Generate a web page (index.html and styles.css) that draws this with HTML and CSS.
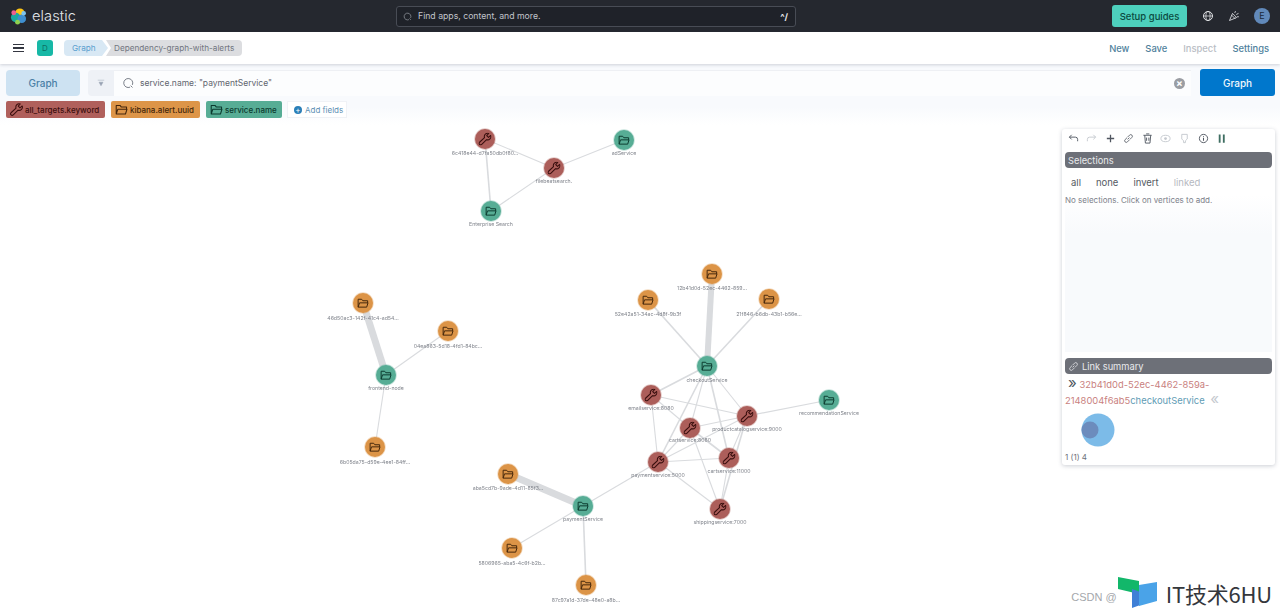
FILE: index.html
```html
<!DOCTYPE html>
<html lang="en">
<head>
<meta charset="utf-8">
<title>Dependency-graph-with-alerts - Graph - Elastic</title>
<link rel="stylesheet" href="styles.css">
</head>
<body>
<svg class="defs" aria-hidden="true">
  <defs>
    <symbol id="i-folder" viewBox="0 0 16 16">
      <path d="M1.5 13.5V3h4.7l1.6 2h6.4v2.8M1.5 13.5h11.4l1.8-5.7H3.4z" fill="none" stroke="currentColor" stroke-width="1.3" stroke-linejoin="round"/>
    </symbol>
    <symbol id="i-key" viewBox="0 0 16 16">
      <path d="M15 3.6l-2.7 2.5-2.2-2.3L12.6 1.2a4 4 0 0 0-5.2 5L1.3 12a1.9 1.9 0 0 0 2.7 2.7l5.9-5.9A4 4 0 0 0 15 3.6z" fill="none" stroke="currentColor" stroke-width="1.3" stroke-linejoin="round"/>
    </symbol>
  </defs>
</svg>

<header class="topbar">
  <div class="brand">
    <svg class="logo" viewBox="0 0 18 18" aria-hidden="true">
      <circle cx="10.5" cy="5.5" r="5" fill="#fec514"/>
      <circle cx="6" cy="10" r="5" fill="#1ba9a0"/>
      <circle cx="12.5" cy="11.5" r="4.5" fill="#3f8fd0"/>
      <circle cx="4" cy="5" r="2.6" fill="#ef5f92"/>
      <circle cx="14.5" cy="5.5" r="2.4" fill="#7dc5f0"/>
      <circle cx="8" cy="15" r="2.6" fill="#8fd14f"/>
    </svg>
    <span class="brand-name">elastic</span>
  </div>
  <div class="global-search">
    <svg class="search-icon" viewBox="0 0 16 16" aria-hidden="true"><path d="M13.5 10.5a6 6 0 1 0-3 3M11.5 11.5l2.5 2.5" fill="none" stroke="currentColor" stroke-width="1.2"/></svg>
    <span class="global-placeholder">Find apps, content, and more.</span>
    <span class="shortcut">^/</span>
  </div>
  <div class="top-actions">
    <button class="setup">Setup guides</button>
    <svg class="top-icon" viewBox="0 0 16 16" aria-hidden="true"><circle cx="8" cy="8" r="6" fill="none" stroke="currentColor" stroke-width="1.3"/><ellipse cx="8" cy="8" rx="2.8" ry="6" fill="none" stroke="currentColor" stroke-width="1"/><path d="M2 8h12" stroke="currentColor"/></svg>
    <svg class="top-icon" viewBox="0 0 16 16" aria-hidden="true"><path d="M2 14L6 4.5 11.5 10zM5 7l4.5 4.5M9 4l1-2.500M11 6l3-1.500M12 9l2.500 0" fill="none" stroke="currentColor" stroke-width="1.100"/></svg>
    <span class="avatar">E</span>
  </div>
</header>

<nav class="subbar">
  <span class="menu"><i></i><i></i><i></i></span>
  <span class="space">D</span>
  <div class="crumbs">
    <span class="crumb-link">Graph</span>
    <span class="crumb-current">Dependency-graph-with-alerts</span>
  </div>
  <div class="sub-links">
    <a class="sub-link">New</a>
    <a class="sub-link">Save</a>
    <a class="sub-link off">Inspect</a>
    <a class="sub-link">Settings</a>
  </div>
</nav>

<section class="controls">
  <div class="query-row">
    <button class="mode">Graph</button>
    <div class="query">
      <span class="filter">
        <svg viewBox="0 0 10 10" aria-hidden="true"><path d="M1 1.500h8M2.500 4h5L5 8.500z" fill="#98a2b3" stroke="#98a2b3" stroke-width=".6"/></svg>
      </span>
      <div class="query-input">
        <svg class="query-icon" viewBox="0 0 16 16" aria-hidden="true"><path d="M13.800 10.500a6 6 0 1 0-3 3M11.500 11.500l2.500 2.500" fill="none" stroke="currentColor" stroke-width="1.100"/></svg>
        <span class="query-text">service.name: "paymentService"</span>
        <span class="clear">×</span>
      </div>
    </div>
    <button class="go">Graph</button>
  </div>
  <div class="field-row">
    <span class="field f-key"><svg class="ficon"><use href="#i-key"/></svg>all_targets.keyword</span>
    <span class="field f-orange"><svg class="ficon"><use href="#i-folder"/></svg>kibana.alert.uuid</span>
    <span class="field f-green"><svg class="ficon"><use href="#i-folder"/></svg>service.name</span>
    <span class="add-field"><i class="plus">+</i>Add fields</span>
  </div>
</section>

<main class="canvas">
  <svg class="graph" viewBox="0 125 1280 487" width="1280" height="487" role="img" aria-label="Dependency graph">
    <g class="edges">
      <line x1="485" y1="139" x2="554" y2="168"/>
      <line class="w2" x1="485" y1="139" x2="491" y2="211"/>
      <line x1="554" y1="168" x2="491" y2="211"/>
      <line x1="554" y1="168" x2="624" y2="140"/>
      <line class="w7" x1="363" y1="303" x2="386" y2="375"/>
      <line x1="448" y1="331" x2="386" y2="375"/>
      <line x1="386" y1="375" x2="375" y2="447"/>
      <line class="w6" x1="712" y1="274" x2="707" y2="366"/>
      <line class="w2" x1="648" y1="300" x2="707" y2="366"/>
      <line class="w2" x1="769" y1="299" x2="707" y2="366"/>
      <line class="w2" x1="707" y1="366" x2="651" y2="395"/>
      <line x1="707" y1="366" x2="747" y2="416"/>
      <line x1="707" y1="366" x2="690" y2="428"/>
      <line class="w2" x1="707" y1="366" x2="729" y2="458"/>
      <line class="w2" x1="707" y1="366" x2="658" y2="462"/>
      <line x1="829" y1="400" x2="747" y2="416"/>
      <line x1="651" y1="395" x2="747" y2="416"/>
      <line x1="651" y1="395" x2="658" y2="462"/>
      <line x1="651" y1="395" x2="690" y2="428"/>
      <line x1="690" y1="428" x2="747" y2="416"/>
      <line class="w2" x1="690" y1="428" x2="729" y2="458"/>
      <line x1="690" y1="428" x2="720" y2="509"/>
      <line x1="690" y1="428" x2="658" y2="462"/>
      <line x1="747" y1="416" x2="658" y2="462"/>
      <line x1="747" y1="416" x2="729" y2="458"/>
      <line class="w2" x1="747" y1="416" x2="720" y2="509"/>
      <line x1="729" y1="458" x2="658" y2="462"/>
      <line x1="729" y1="458" x2="720" y2="509"/>
      <line x1="658" y1="462" x2="720" y2="509"/>
      <line x1="658" y1="462" x2="583" y2="506"/>
      <line class="w7" x1="508" y1="474" x2="583" y2="506"/>
      <line x1="583" y1="506" x2="512" y2="548"/>
      <line class="w2" x1="583" y1="506" x2="586" y2="585"/>
    </g>

    <g class="node key" transform="translate(485 139)"><circle r="10"/><use href="#i-key" x="-6.500" y="-6.500" width="13" height="13"/></g>
    <g class="node key" transform="translate(554 168)"><circle r="10"/><use href="#i-key" x="-6.500" y="-6.500" width="13" height="13"/></g>
    <g class="node green" transform="translate(624 140)"><circle r="10"/><use href="#i-folder" x="-6" y="-6" width="12" height="12"/></g>
    <g class="node green" transform="translate(491 211)"><circle r="10"/><use href="#i-folder" x="-6" y="-6" width="12" height="12"/></g>

    <g class="node orange" transform="translate(363 303)"><circle r="10"/><use href="#i-folder" x="-6" y="-6" width="12" height="12"/></g>
    <g class="node orange" transform="translate(448 331)"><circle r="10"/><use href="#i-folder" x="-6" y="-6" width="12" height="12"/></g>
    <g class="node green" transform="translate(386 375)"><circle r="10"/><use href="#i-folder" x="-6" y="-6" width="12" height="12"/></g>
    <g class="node orange" transform="translate(375 447)"><circle r="10"/><use href="#i-folder" x="-6" y="-6" width="12" height="12"/></g>

    <g class="node orange" transform="translate(712 274)"><circle r="10"/><use href="#i-folder" x="-6" y="-6" width="12" height="12"/></g>
    <g class="node orange" transform="translate(648 300)"><circle r="10"/><use href="#i-folder" x="-6" y="-6" width="12" height="12"/></g>
    <g class="node orange" transform="translate(769 299)"><circle r="10"/><use href="#i-folder" x="-6" y="-6" width="12" height="12"/></g>
    <g class="node green" transform="translate(707 366)"><circle r="10"/><use href="#i-folder" x="-6" y="-6" width="12" height="12"/></g>
    <g class="node green" transform="translate(829 400)"><circle r="10"/><use href="#i-folder" x="-6" y="-6" width="12" height="12"/></g>

    <g class="node key" transform="translate(651 395)"><circle r="10"/><use href="#i-key" x="-6.500" y="-6.500" width="13" height="13"/></g>
    <g class="node key" transform="translate(747 416)"><circle r="10"/><use href="#i-key" x="-6.500" y="-6.500" width="13" height="13"/></g>
    <g class="node key" transform="translate(690 428)"><circle r="10"/><use href="#i-key" x="-6.500" y="-6.500" width="13" height="13"/></g>
    <g class="node key" transform="translate(729 458)"><circle r="10"/><use href="#i-key" x="-6.500" y="-6.500" width="13" height="13"/></g>
    <g class="node key" transform="translate(658 462)"><circle r="10"/><use href="#i-key" x="-6.500" y="-6.500" width="13" height="13"/></g>
    <g class="node key" transform="translate(720 509)"><circle r="10"/><use href="#i-key" x="-6.500" y="-6.500" width="13" height="13"/></g>

    <g class="node orange" transform="translate(508 474)"><circle r="10"/><use href="#i-folder" x="-6" y="-6" width="12" height="12"/></g>
    <g class="node green" transform="translate(583 506)"><circle r="10"/><use href="#i-folder" x="-6" y="-6" width="12" height="12"/></g>
    <g class="node orange" transform="translate(512 548)"><circle r="10"/><use href="#i-folder" x="-6" y="-6" width="12" height="12"/></g>
    <g class="node orange" transform="translate(586 585)"><circle r="10"/><use href="#i-folder" x="-6" y="-6" width="12" height="12"/></g>

    <g class="labels">
      <text x="485" y="155">6c418e44-d7fa50db0f80...</text>
      <text x="554" y="183">filebeatsearch.</text>
      <text x="624" y="155">adService</text>
      <text x="491" y="226">Enterprise Search</text>
      <text x="363" y="320">46d50ac3-142f-41c4-ad54...</text>
      <text x="448" y="348">04ea863-5d18-4fd1-84bc...</text>
      <text x="386" y="390">frontend-node</text>
      <text x="375" y="464">6b05da75-d59e-4ee1-84ff...</text>
      <text x="712" y="290">12b41d0d-52ec-4462-859...</text>
      <text x="648" y="316">52e42a51-34ac-4d8f-9b3f</text>
      <text x="769" y="316">21f846-b6db-43b1-b56e...</text>
      <text x="707" y="382">checkoutService</text>
      <text x="651" y="410">emailservice:8080</text>
      <text x="747" y="431">productcatalogservice:9000</text>
      <text x="690" y="442">cartservice:8080</text>
      <text x="729" y="473">cartservice:11000</text>
      <text x="658" y="477">paymentservice:5000</text>
      <text x="720" y="524">shippingservice:7000</text>
      <text x="829" y="415">recommendationService</text>
      <text x="508" y="490">aba5cd7b-9ade-4d11-85f3...</text>
      <text x="583" y="521">paymentService</text>
      <text x="512" y="565">5806965-aba5-4c6f-b2b...</text>
      <text x="586" y="602">87c97a1d-37de-48e0-a8b...</text>
    </g>
  </svg>

  <aside class="panel">
    <div class="tools">
      <svg class="tool" viewBox="0 0 12 12" aria-hidden="true"><path d="M4 2L1.500 4.500 4 7M1.500 4.500H8a2.500 2.500 0 0 1 2.500 2.500v2" fill="none" stroke="currentColor"/></svg>
      <svg class="tool off" viewBox="0 0 12 12" aria-hidden="true"><path d="M8 2l2.500 2.500L8 7M10.500 4.500H4A2.500 2.500 0 0 0 1.500 7v2" fill="none" stroke="currentColor"/></svg>
      <svg class="tool" viewBox="0 0 12 12" aria-hidden="true"><path d="M6 2v8M2 6h8" fill="none" stroke="currentColor" stroke-width="1.400"/></svg>
      <svg class="tool" viewBox="0 0 12 12" aria-hidden="true"><path d="M5 7l2-2M4.500 5L2.300 7.200a1.700 1.700 0 0 0 2.500 2.500L7 7.500M7.500 7l2.200-2.200a1.700 1.700 0 0 0-2.500-2.500L5 4.500" fill="none" stroke="currentColor" stroke-width=".9"/></svg>
      <svg class="tool" viewBox="0 0 12 12" aria-hidden="true"><path d="M1.500 2.500h9M4.500 1h3.500M3 2.500l.7 8.500h5L9.500 2.500M5 5v3.500M7.500 5v3.500" fill="none" stroke="currentColor" stroke-width="1"/></svg>
      <svg class="tool off" viewBox="0 0 12 12" aria-hidden="true"><ellipse cx="6" cy="6" rx="5" ry="3.500" fill="none" stroke="currentColor"/><circle cx="6" cy="6" r="1.500" fill="currentColor"/></svg>
      <svg class="tool off" viewBox="0 0 12 12" aria-hidden="true"><path d="M3 1.500h6v5L7 8.500v2H5v-2L3 6.500z" fill="none" stroke="currentColor"/></svg>
      <svg class="tool" viewBox="0 0 12 12" aria-hidden="true"><circle cx="6" cy="6" r="4.500" fill="none" stroke="currentColor"/><path d="M6 5.500v3M6 3.500v1" stroke="currentColor" stroke-width="1.100"/></svg>
      <svg class="tool pause" viewBox="0 0 12 12" aria-hidden="true"><path d="M3 1.500h2v9H3zM7.500 1.500h2v9h-2z" fill="currentColor"/></svg>
    </div>
    <h2 class="bar">Selections</h2>
    <div class="sel-links">
      <span>all</span><span>none</span><span>invert</span><span class="off">linked</span>
    </div>
    <div class="sel-body">No selections. Click on vertices to add.</div>
    <h2 class="bar">
      <svg class="bar-icon" viewBox="0 0 12 12" aria-hidden="true"><path d="M5 7l2-2M4.500 5L2.300 7.200a1.700 1.700 0 0 0 2.500 2.500L7 7.500M7.500 7l2.200-2.200a1.700 1.700 0 0 0-2.500-2.500L5 4.500" fill="none" stroke="currentColor"/></svg>
      Link summary
    </h2>
    <p class="link-text"><span class="chev">»</span> <span class="red">32b41d0d-52ec-4462-859a-2148004f6ab5</span><span class="teal">checkoutService</span> <span class="chev pale">«</span></p>
    <svg class="venn" viewBox="0 0 34 34" aria-hidden="true"><circle cx="17" cy="17" r="16.500" fill="#7cbbe8"/><circle cx="9" cy="17" r="8.500" fill="#6c8cbd"/></svg>
    <p class="counts">1 (1) 4</p>
  </aside>

  <div class="watermark">
    <span class="wm-csdn">CSDN @</span>
    <svg class="wm-logo" viewBox="0 0 40 31" aria-hidden="true"><path d="M0 0l21 4v13L0 12z" fill="#12b76a"/><path d="M14 12l11 4v11l-11 4z" fill="#3f7fd6"/><path d="M21 8l18-3v19l-18 5z" fill="#4aa3e8"/></svg>
    <span class="wm-text">IT技术6HU</span>
  </div>
</main>
</body>
</html>
```
FILE: styles.css
```css
* { box-sizing: border-box; }
html, body { height: 100%; }
body {
  margin: 0;
  display: flex;
  flex-direction: column;
  height: 612px;
  overflow: hidden;
  background: #fff;
  font-family: Inter, "Noto Sans", "Liberation Sans", sans-serif;
  color: #343741;
}
button { font: inherit; border: 0; }
.defs { position: absolute; width: 0; height: 0; }

/* top bar */
.topbar {
  flex: 0 0 32px;
  display: flex;
  align-items: center;
  position: relative;
  background: #25282f;
  padding: 0 10px 0 10px;
}
.brand { display: flex; align-items: center; gap: 5px; width: 386px; }
.logo { width: 17px; height: 17px; }
.brand-name { color: #e4e6ea; font-size: 14.6px; font-weight: 300; letter-spacing: .1px; }
.global-search {
  width: 400px;
  height: 21px;
  display: flex;
  align-items: center;
  padding: 0 7px 0 6px;
  border: 1px solid #484c55;
  border-radius: 3px;
  background: #1f2229;
  color: #c2c5cb;
}
.search-icon { width: 9px; height: 9px; margin-right: 6px; flex: none; color: #9da1a9; }
.global-placeholder { flex: 1; font-size: 8.7px; }
.shortcut { font-size: 9px; font-weight: 700; color: #e8e9eb; }
.top-actions { flex: 1; display: flex; align-items: center; justify-content: flex-end; }
.setup {
  width: 75px;
  height: 22px;
  margin-right: 15px;
  border-radius: 3px;
  background: #4dd0bd;
  color: #0b4a40;
  font-size: 9.5px;
  font-weight: 500;
}
.top-icon { width: 12px; height: 12px; margin-right: 14px; color: #e6e7ea; }
.avatar {
  width: 16px;
  height: 16px;
  border-radius: 50%;
  background: #6189ba;
  color: #1c2a3c;
  font-size: 9px;
  line-height: 16px;
  text-align: center;
}

/* sub navigation */
.subbar {
  flex: 0 0 32px;
  display: flex;
  align-items: center;
  position: relative;
  z-index: 1;
  background: #fff;
  box-shadow: 0 1px 3px rgba(60, 70, 90, .22);
  padding: 0 11px 0 13px;
}
.menu { width: 11px; display: flex; flex-direction: column; gap: 2px; margin-right: 13px; }
.menu i { height: 1.5px; background: #343741; }
.space {
  width: 16px;
  height: 16px;
  margin-right: 11px;
  border-radius: 3px;
  background: #17b8a6;
  color: #0d6f64;
  font-size: 8px;
  line-height: 16px;
  text-align: center;
}
.crumbs { display: flex; font-size: 8.2px; height: 16px; line-height: 16px; white-space: nowrap; }
.crumb-link {
  width: 44px;
  padding-left: 8px;
  border-radius: 4px 0 0 4px;
  background: #d8e8f4;
  color: #5b9fcf;
  clip-path: polygon(0 0, 38px 0, 44px 50%, 38px 100%, 0 100%);
}
.crumb-current {
  width: 136px;
  margin-left: -2px;
  padding-left: 8px;
  border-radius: 0 4px 4px 0;
  background: #dcdde0;
  color: #71757f;
  clip-path: polygon(0 0, 100% 0, 100% 100%, 0 100%, 5px 50%);
}
.sub-links { margin-left: auto; display: flex; gap: 16px; font-size: 9.4px; font-weight: 500; }
.sub-link { color: #4f7f9c; }
.sub-link.off { color: #b9bdc4; }

/* query controls */
.controls {
  flex: 0 0 61px;
  padding: 5px 5px 0 6px;
  background: linear-gradient(#f8fafd 0, #f8fafd 70%, #fff 100%);
}
.query-row { display: flex; align-items: center; height: 27px; }
.mode {
  width: 74px;
  height: 26px;
  margin-right: 8px;
  border-radius: 4px;
  background: #cde2f2;
  color: #4a7fa6;
  font-size: 10px;
  font-weight: 500;
}
.query { flex: 1; display: flex; height: 26px; margin-right: 9px; }
.filter {
  width: 26px;
  display: flex;
  align-items: center;
  justify-content: center;
  border-radius: 4px 0 0 4px;
  background: #eef1f6;
}
.filter svg { width: 8px; height: 8px; }
.query-input {
  flex: 1;
  display: flex;
  align-items: center;
  padding: 1px 6px 0 8px;
  background: #fcfdfe;
  box-shadow: inset 0 1px 0 #eef0f4;
}
.query-icon { width: 12px; height: 12px; margin-right: 6px; color: #5f6570; flex: none; }
.query-text { flex: 1; font-size: 8.5px; color: #61656e; }
.clear {
  width: 11px;
  height: 11px;
  border-radius: 50%;
  background: #9a9da3;
  color: #fff;
  font-size: 10px;
  font-weight: 700;
  line-height: 11px;
  text-align: center;
}
.go {
  width: 75px;
  height: 27px;
  border-radius: 3px;
  background: #0077cc;
  color: #f2f8fc;
  font-size: 10px;
  font-weight: 500;
}
.field-row { display: flex; align-items: center; gap: 6px; height: 17px; margin-top: 5px; }
.field {
  height: 17px;
  display: flex;
  align-items: center;
  gap: 2px;
  padding: 0 4px;
  border-radius: 2px;
  font-size: 8px;
  font-weight: 500;
  white-space: nowrap;
}
.ficon { width: 13px; height: 13px; flex: none; }
.f-key { width: 99px; background: #b0605c; color: #3c0f0e; }
.f-orange { width: 89px; background: #dd9548; color: #43250a; }
.f-green { width: 76px; background: #57ad95; color: #0b3a2e; }
.add-field {
  width: 60px;
  height: 17px;
  margin-left: -1px;
  display: flex;
  align-items: center;
  gap: 3px;
  padding-left: 6px;
  border: 1px solid #f0f2f6;
  background: #fff;
  color: #5d90b4;
  font-size: 8px;
  white-space: nowrap;
}
.plus {
  flex: none;
  width: 8px;
  height: 8px;
  border-radius: 50%;
  background: #2a7fb8;
  color: #fff;
  font-size: 8px;
  font-style: normal;
  line-height: 8px;
  text-align: center;
}

/* graph canvas */
.canvas { flex: 1; position: relative; overflow: hidden; background: #fff; }
.graph { display: block; }
.edges line { stroke: #d9dbde; stroke-width: 1.1; }
.edges .w2 { stroke-width: 1.6; }
.edges .w6 { stroke-width: 6; }
.edges .w7 { stroke-width: 7; }
.node circle { stroke-width: 1.5; }
.node.key { color: #3a0f0e; }
.node.key circle { fill: #ac5e5a; stroke: rgba(172, 94, 90, .35); }
.node.orange { color: #43250a; }
.node.orange circle { fill: #dc9447; stroke: rgba(220, 148, 71, .35); }
.node.green { color: #0b3a2e; }
.node.green circle { fill: #57ad95; stroke: rgba(87, 173, 149, .35); }
.labels { filter: blur(.3px); }
.labels text {
  fill: #80848c;
  font-size: 5.2px;
  text-anchor: middle;
}

/* side panel */
.panel {
  position: absolute;
  top: 4px;
  left: 1062px;
  width: 213px;
  height: 336px;
  display: flex;
  flex-direction: column;
  padding: 0 3px 3px;
  background: #fff;
  border-radius: 3px;
  box-shadow: 0 1px 4px rgba(70, 80, 100, .28);
  color: #5f636c;
}
.tools { display: flex; align-items: center; height: 23px; padding: 0 0 4px 2.5px; gap: 7.6px; flex: none; }
.tool { width: 11px; height: 11px; color: #505660; flex: none; }
.tool.off { color: #c4c8ce; }
.tool.pause { color: #3f6e62; }
.bar {
  flex: none;
  display: flex;
  align-items: center;
  gap: 3px;
  height: 16px;
  margin: 0;
  padding-left: 3px;
  border-radius: 4px;
  background: #6d7078;
  color: #e9eaec;
  font-size: 9.300px;
  font-weight: 400;
}
.bar-icon { width: 11px; height: 11px; color: #d9dadd; }
.sel-links {
  flex: none;
  display: flex;
  gap: 15px;
  height: 27px;
  align-items: center;
  padding: 1px 0 0 6px;
  color: #555a63;
  font-size: 9.500px;
}
.sel-links .off { color: #b6b9bf; }
.sel-body {
  flex: 1;
  margin-bottom: 6px;
  background: linear-gradient(#fff 0, #f8fafc 25%, #f8fafc 100%);
  color: #7d818a;
  font-size: 8px;
}
.link-text {
  flex: none;
  margin: 3px 0 0;
  font-size: 9.4px;
  line-height: 16px;
}
.chev { color: #4e5560; font-size: 15px; line-height: 12px; margin-left: 3px; }
.chev.pale { color: #c5c9cf; }
.red { color: #c97f80; }
.teal { color: #5f9cb5; }
.venn { flex: none; width: 34px; height: 34px; margin: 4px 0 0 16px; }
.counts { margin: 5px 0 0; font-size: 8px; color: #6d7179; }

/* watermark */
.watermark {
  position: absolute;
  right: 8px;
  bottom: 4px;
  display: flex;
  align-items: center;
}
.wm-csdn { margin: 8px 1px 0 0; color: #a4a7ac; font-family: "Liberation Sans", sans-serif; font-size: 11px; }
.wm-logo { width: 40px; height: 31px; margin-right: 8px; }
.wm-text {
  color: #34373c;
  font-family: "Noto Sans CJK SC", "Noto Sans", sans-serif;
  font-size: 22px;
  line-height: 26px;
  letter-spacing: -.2px;
}
```
